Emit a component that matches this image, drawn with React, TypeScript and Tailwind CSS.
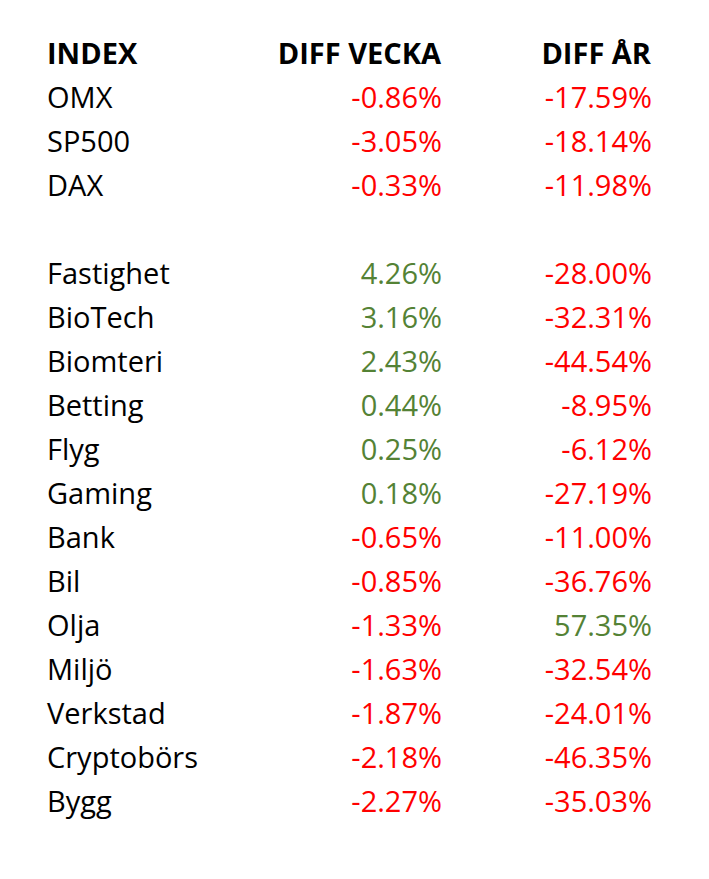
const rows: [string, number, number][] = [
  ["OMX", -0.86, -17.59],
  ["SP500", -3.05, -18.14],
  ["DAX", -0.33, -11.98],
];

const sectors: [string, number, number][] = [
  ["Fastighet", 4.26, -28.0],
  ["BioTech", 3.16, -32.31],
  ["Biomteri", 2.43, -44.54],
  ["Betting", 0.44, -8.95],
  ["Flyg", 0.25, -6.12],
  ["Gaming", 0.18, -27.19],
  ["Bank", -0.65, -11.0],
  ["Bil", -0.85, -36.76],
  ["Olja", -1.33, 57.35],
  ["Miljö", -1.63, -32.54],
  ["Verkstad", -1.87, -24.01],
  ["Cryptobörs", -2.18, -46.35],
  ["Bygg", -2.27, -35.03],
];

function Pct({ value }: { value: number }) {
  return (
    <div className={value < 0 ? "text-right text-[#ff0000]" : "text-right text-[#548235]"}>
      {value.toFixed(2)}%
    </div>
  );
}

function Row({ name, week, year }: { name: string; week: number; year: number }) {
  return (
    <div className="grid h-[44px] grid-cols-[200px_195px_210px] items-center">
      <div className="text-black">{name}</div>
      <Pct value={week} />
      <Pct value={year} />
    </div>
  );
}

export default function App() {
  return (
    <div
      className="min-h-[879px] w-[709px] bg-white pl-[47px] pt-[30px] text-[29px] leading-none"
      style={{ fontFamily: '"Open Sans", sans-serif' }}
    >
      <div className="grid h-[44px] grid-cols-[200px_194px_210px] items-center font-bold text-black">
        <div>INDEX</div>
        <div className="text-right">DIFF VECKA</div>
        <div className="text-right">DIFF ÅR</div>
      </div>
      {rows.map(([name, week, year]) => (
        <Row key={name} name={name} week={week} year={year} />
      ))}
      <div className="h-[44px]" />
      {sectors.map(([name, week, year]) => (
        <Row key={name} name={name} week={week} year={year} />
      ))}
    </div>
  );
}
